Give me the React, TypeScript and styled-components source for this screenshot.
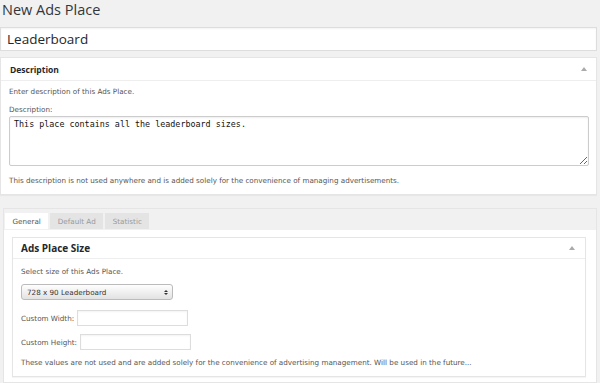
import React from "react";
import styled, { createGlobalStyle } from "styled-components";

const Global = createGlobalStyle`
  html, body { margin: 0; padding: 0; background: #f1f1f1; overflow: hidden; }
  body { font-family: "Open Sans", "Noto Sans", sans-serif; color: #444; -webkit-font-smoothing: antialiased; }
  * { box-sizing: border-box; }
`;

const Page = styled.div`
  width: 600px;
  height: 383px;
  padding: 0 3px 0 0;
  display: flex;
  flex-direction: column;
`;

const Title = styled.h1`
  margin: 0 0 0 2px;
  font-size: 14.5px;
  font-weight: 400;
  line-height: 19px;
  color: #32373c;
`;

const TitleInput = styled.input`
  margin-top: 8px;
  height: 24px;
  width: 100%;
  border: 1px solid #ddd;
  background: #fff;
  font-family: "Open Sans", sans-serif;
  font-size: 13.5px;
  color: #23282d;
  padding: 0 6px;
  outline: none;
  box-shadow: inset 0 1px 2px rgba(0,0,0,0.05);
`;

const Postbox = styled.section<{ $flat?: boolean }>`
  margin-top: ${(p) => (p.$flat ? 0 : 6)}px;
  background: #fff;
  border: 1px solid #e5e5e5;
  box-shadow: 0 1px 1px rgba(0,0,0,0.04);
`;

const BoxHeader = styled.div<{ $big?: boolean }>`
  height: ${(p) => (p.$big ? 21 : 23)}px;
  border-bottom: 1px solid #eee;
  display: flex;
  align-items: center;
  justify-content: space-between;
  padding: 0 ${(p) => (p.$big ? 10 : 9)}px 0 ${(p) => (p.$big ? 8 : 9)}px;
  font-weight: 700;
  font-size: ${(p) => (p.$big ? 10 : 8.5)}px;
  color: #23282d;
`;

const Arrow = styled.span`
  width: 0;
  height: 0;
  border-left: 3px solid transparent;
  border-right: 3px solid transparent;
  border-bottom: 4px solid #aaa;
`;

const BoxBody = styled.div<{ $pad?: string }>`
  padding: ${(p) => p.$pad ?? "7px 7px 7px 8px"};
  display: flex;
  flex-direction: column;
`;

const Small = styled.p<{ $mt?: number }>`
  margin: ${(p) => p.$mt ?? 0}px 0 0 0;
  font-family: "DejaVu Sans", Verdana, sans-serif;
  font-size: 7.2px;
  line-height: 10px;
  color: #555;
  white-space: nowrap;
`;

const TextArea = styled.textarea`
  margin-top: 1px;
  height: 50px;
  width: 100%;
  border: 1px solid #ccc;
  border-radius: 2px;
  resize: both;
  font-family: "DejaVu Sans Mono", "Liberation Mono", monospace;
  font-size: 8.4px;
  line-height: 11px;
  color: #111;
  padding: 2px 4px;
  outline: none;
  box-shadow: inset 0 1px 2px rgba(0,0,0,0.07);
`;

const TabsBox = styled.div`
  margin: 13px 0 0 3px;
  border: 1px solid #e5e5e5;
  background: #fff;
  flex: 1;
  display: flex;
  flex-direction: column;
`;

const TabBar = styled.div`
  background: #f1f1f1;
  display: flex;
  gap: 2px;
  padding: 4px 0 0 1px;
  height: 21px;
`;

const Tab = styled.div<{ $active?: boolean }>`
  height: 16px;
  padding: 0 7.5px;
  display: flex;
  align-items: center;
  font-family: "DejaVu Sans", Verdana, sans-serif;
  font-size: 7.2px;
  color: ${(p) => (p.$active ? "#555" : "#999")};
  background: ${(p) => (p.$active ? "#fff" : "#e4e4e4")};
`;

const TabContent = styled.div`
  padding: 7px 10px 0 8px;
`;

const Row = styled.label<{ $mt: number }>`
  margin-top: ${(p) => p.$mt}px;
  display: flex;
  align-items: center;
  gap: 3px;
  font-family: "DejaVu Sans", Verdana, sans-serif;
  font-size: 7.2px;
  color: #555;
`;

const SelectBox = styled.div`
  margin-top: 7px;
  width: 152px;
  height: 16px;
  border: 1px solid #bbb;
  border-radius: 3px;
  background: linear-gradient(#fefefe, #e2e2e2);
  display: flex;
  align-items: center;
  justify-content: space-between;
  padding: 0 4px 0 5px;
  font-family: "DejaVu Sans", Verdana, sans-serif;
  font-size: 7.2px;
  color: #333;
`;

const Updown = styled.span`
  display: flex;
  flex-direction: column;
  gap: 1px;
`;

const Tri = styled.span<{ $up?: boolean }>`
  width: 0;
  height: 0;
  border-left: 2px solid transparent;
  border-right: 2px solid transparent;
  ${(p) => (p.$up ? "border-bottom: 2px solid #333;" : "border-top: 2px solid #333;")}
`;

const SmallInput = styled.input`
  width: 111px;
  height: 16px;
  border: 1px solid #ddd;
  background: #fff;
  outline: none;
  box-shadow: inset 0 1px 2px rgba(0,0,0,0.05);
`;

export default function App() {
  return (
    <Page>
      <Global />
      <Title>New Ads Place</Title>
      <TitleInput defaultValue="Leaderboard" />
      <Postbox>
        <BoxHeader>
          <span>Description</span>
          <Arrow />
        </BoxHeader>
        <BoxBody $pad="6px 7px 8px 8px">
          <Small>Enter description of this Ads Place.</Small>
          <Small $mt={8}>Description:</Small>
          <TextArea defaultValue="This place contains all the leaderboard sizes." />
          <Small $mt={10}>
            This description is not used anywhere and is added solely for the convenience of managing advertisements.
          </Small>
        </BoxBody>
      </Postbox>
      <TabsBox>
        <TabBar>
          <Tab $active>General</Tab>
          <Tab>Default Ad</Tab>
          <Tab>Statistic</Tab>
        </TabBar>
        <TabContent>
          <Postbox $flat>
            <BoxHeader $big>
              <span>Ads Place Size</span>
              <Arrow />
            </BoxHeader>
            <BoxBody $pad="8px 8px 8px 8px">
              <Small>Select size of this Ads Place.</Small>
              <SelectBox>
                <span>728 x 90 Leaderboard</span>
                <Updown>
                  <Tri $up />
                  <Tri />
                </Updown>
              </SelectBox>
              <Row $mt={10}>
                Custom Width:
                <SmallInput />
              </Row>
              <Row $mt={8}>
                Custom Height:
                <SmallInput />
              </Row>
              <Small $mt={8}>
                These values are not used and are added solely for the convenience of advertising management. Will be used in the future...
              </Small>
            </BoxBody>
          </Postbox>
        </TabContent>
      </TabsBox>
    </Page>
  );
}
